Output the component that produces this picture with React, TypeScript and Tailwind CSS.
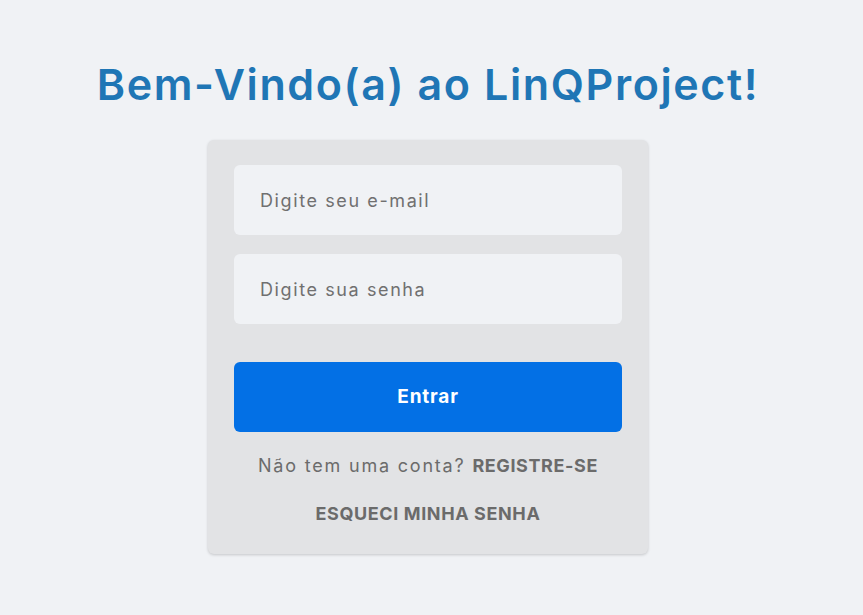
import React from "react";

export default function App() {
  const font = { fontFamily: "Inter, 'Noto Sans', sans-serif" };
  return (
    <div className="min-h-[615px] w-full bg-[#f0f2f5] flex flex-col items-center pr-[7px]" style={font}>
      <h1 className="mt-[58px] text-[43px] leading-[52px] font-semibold text-[#1f76b5] tracking-[1.6px]">
        Bem-Vindo(a) ao LinQProject!
      </h1>
      <div className="mt-[30px] w-[440px] rounded-[6px] bg-[#e2e3e5] shadow-[0_1px_3px_rgba(0,0,0,0.18)] px-[26px] pt-[25px] pb-[28px] flex flex-col">
        <input
          type="email"
          placeholder="Digite seu e-mail"
          className="h-[70px] w-full rounded-[6px] bg-[#f0f2f5] px-[26px] text-[18px] tracking-[1.6px] text-[#6b6b6b] placeholder:text-[#707070] outline-none"
        />
        <input
          type="password"
          placeholder="Digite sua senha"
          className="mt-[19px] h-[70px] w-full rounded-[6px] bg-[#f0f2f5] px-[26px] text-[18px] tracking-[1.6px] text-[#6b6b6b] placeholder:text-[#707070] outline-none"
        />
        <button className="mt-[38px] h-[70px] w-full rounded-[6px] bg-[#0370e5] text-white text-[19px] font-bold tracking-[0.8px]">
          Entrar
        </button>
        <p className="mt-[22px] text-center text-[18px] leading-[24px] text-[#6b6b6b] tracking-[1.8px]">
          Não tem uma conta? <span className="font-bold tracking-[0.6px]">REGISTRE-SE</span>
        </p>
        <p className="mt-[24px] text-center text-[18px] leading-[24px] font-bold text-[#6b6b6b] tracking-[0.6px]">
          ESQUECI MINHA SENHA
        </p>
      </div>
    </div>
  );
}
